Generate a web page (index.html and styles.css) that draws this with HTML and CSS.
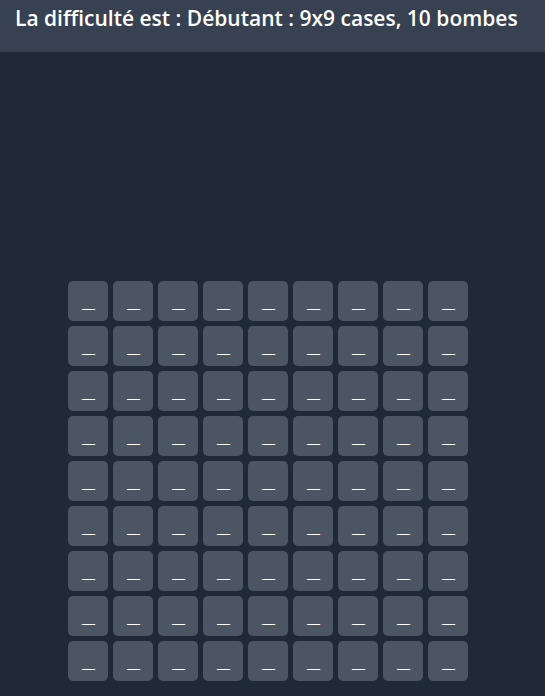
FILE: index.html
```html
<!DOCTYPE html>
<html lang="fr">
<head>
<meta charset="utf-8">
<link rel="stylesheet" href="styles.css">
</head>
<body>
<header class="bar">
  <h1 class="title">La difficulté est : Débutant : 9x9 cases, 10 bombes</h1>
</header>
<main class="board-wrap">
  <div class="board" id="board"></div>
</main>
<script>
  var b = document.getElementById('board');
  for (var i = 0; i < 81; i++) {
    var c = document.createElement('div');
    c.className = 'cell';
    c.textContent = '__';
    b.appendChild(c);
  }
</script>
</body>
</html>
```
FILE: styles.css
```css
html, body {
  margin: 0;
  padding: 0;
  background: #1f2937;
  height: 100%;
}
body {
  font-family: "Open Sans", "Noto Sans", sans-serif;
  color: #fff;
}
.bar {
  background: #374151;
  height: 52px;
  padding: 0 15px;
  box-sizing: border-box;
}
.title {
  margin: 0;
  font-size: 21px;
  font-weight: 600;
  line-height: 36px;
}
.board-wrap {
  display: flex;
  justify-content: center;
  padding-top: 229px;
  padding-right: 9px;
}
.board {
  display: grid;
  grid-template-columns: repeat(9, 40px);
  grid-auto-rows: 40px;
  gap: 5px;
}
.cell {
  background: #4b5563;
  border-radius: 5px;
  display: flex;
  align-items: center;
  justify-content: center;
  font-size: 16px;
  line-height: 1;
  padding-top: 2px;
  box-sizing: border-box;
  letter-spacing: -1px;
}
```
